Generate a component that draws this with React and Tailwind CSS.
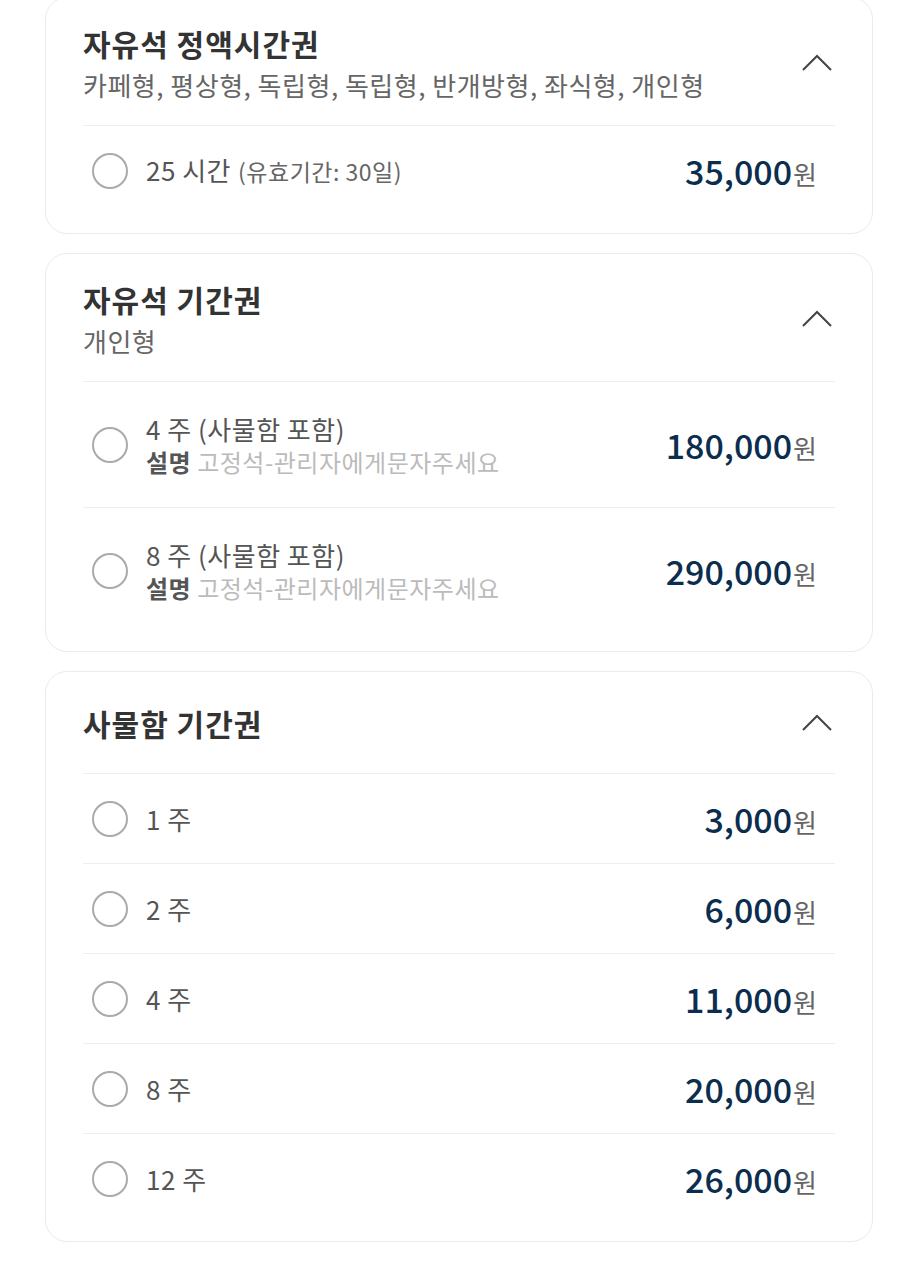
import React from "react";

const FONT = { fontFamily: '"Noto Sans CJK KR", "Noto Sans", sans-serif' };

const sections = [
  {
    title: "자유석 정액시간권",
    sub: "카페형, 평상형, 독립형, 독립형, 반개방형, 좌식형, 개인형",
    items: [{ label: "25 시간", note: "(유효기간: 30일)", price: "35,000" }],
  },
  {
    title: "자유석 기간권",
    sub: "개인형",
    items: [
      { label: "4 주 (사물함 포함)", desc: "고정석-관리자에게문자주세요", price: "180,000" },
      { label: "8 주 (사물함 포함)", desc: "고정석-관리자에게문자주세요", price: "290,000" },
    ],
  },
  {
    title: "사물함 기간권",
    items: [
      { label: "1 주", price: "3,000" },
      { label: "2 주", price: "6,000" },
      { label: "4 주", price: "11,000" },
      { label: "8 주", price: "20,000" },
      { label: "12 주", price: "26,000" },
    ],
  },
];

function ChevronUp() {
  return (
    <svg width="32" height="18" viewBox="0 0 32 18" fill="none">
      <polyline points="2,16 16,2 30,16" stroke="#444" strokeWidth="2" />
    </svg>
  );
}

function Row({ item }) {
  return (
    <div
      className={`flex items-center justify-between border-t border-[#eeeeee] pl-[9px] pr-[18px] ${
        item.desc ? "h-[126px]" : "h-[90px]"
      }`}
    >
      <div className="flex items-center gap-[18px]">
        <div className="w-[36px] h-[36px] rounded-full border-2 border-[#aaaaaa] shrink-0" />
        <div className="flex flex-col">
          <div className="text-[26px] leading-[34px] text-[#555] tracking-[0.5px]">
            {item.label}
            {item.note && (
              <span className="text-[23px] text-[#666] ml-[7px]">{item.note}</span>
            )}
          </div>
          {item.desc && (
            <div className="text-[24px] leading-[32px] tracking-[0.5px]">
              <span className="font-bold text-[#555]">설명</span>
              <span className="text-[#bbbbbb] ml-[6px]">{item.desc}</span>
            </div>
          )}
        </div>
      </div>
      <div className="flex items-baseline">
        <span className="text-[34px] font-medium text-[#0c2e4e]">{item.price}</span>
        <span className="text-[26px] text-[#666] ml-[1px]">원</span>
      </div>
    </div>
  );
}

function Card({ section }) {
  return (
    <div className="bg-white border border-[#ebebeb] rounded-[22px] px-[37px] pb-[18px]">
      <div
        className={`flex items-center justify-between ${
          section.sub ? "pt-[26px] pb-[24px]" : "h-[101px]"
        }`}
      >
        <div className="flex flex-col gap-[6px]">
          <div className="text-[30px] leading-[38px] font-bold text-[#333] tracking-[1px]">
            {section.title}
          </div>
          {section.sub && (
            <div className="text-[26px] leading-[33px] text-[#666] tracking-[0.5px]">
              {section.sub}
            </div>
          )}
        </div>
        <div className="mr-[2px]">
          <ChevronUp />
        </div>
      </div>
      {section.items.map((item, i) => (
        <Row key={i} item={item} />
      ))}
    </div>
  );
}

export default function App() {
  return (
    <div className="min-h-screen bg-white" style={FONT}>
      <div className="flex flex-col gap-[19px] pl-[45px] pr-[44px] -mt-[3px]">
        {sections.map((s, i) => (
          <Card key={i} section={s} />
        ))}
      </div>
    </div>
  );
}
